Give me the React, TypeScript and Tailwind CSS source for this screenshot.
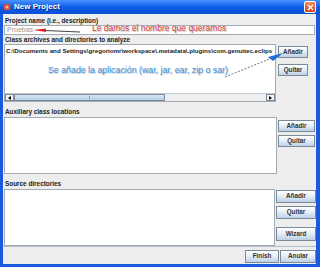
import React from "react";

const btn =
  "flex items-center justify-center border border-[#7a8a99] bg-gradient-to-b from-[#ffffff] via-[#e3ecf6] to-[#bcd0e6] text-[6.3px] font-bold text-[#333] leading-none";

const Label = ({ text, h, pb = 0 }: { text: string; h: string; pb?: number }) => (
  <div className={`${h} flex items-end pl-[2px] text-[6.4px] font-bold text-[#222] leading-[7px]`} style={{ paddingBottom: pb }}>
    {text}
  </div>
);

const App = () => {
  return (
    <div className="relative w-[320px] h-[267px] bg-[#1a5ade] flex flex-col overflow-hidden font-['Liberation_Sans',Arial,sans-serif]">
      {/* title bar */}
      <div className="h-[14px] flex items-center bg-gradient-to-b from-[#4a92ff] via-[#0c5ce8] to-[#0a50d4] pl-[3px] pr-[4px]">
        <svg width="8" height="8" viewBox="0 0 8 8">
          <circle cx="4" cy="4" r="3.5" fill="#e04a3a" />
          <circle cx="4" cy="4" r="1.6" fill="#f5b0a0" />
        </svg>
        <span className="ml-[3px] text-[8px] font-bold text-white [text-shadow:1px_1px_0_#0a2a80]">New Project</span>
        <div className="ml-auto w-[12px] h-[12px] rounded-[2px] border border-white bg-gradient-to-b from-[#f08a5a] to-[#d2401c] flex items-center justify-center">
          <svg width="7" height="7" viewBox="0 0 7 7">
            <path d="M1 1 L6 6 M6 1 L1 6" stroke="#fff" strokeWidth="1.4" />
          </svg>
        </div>
      </div>

      {/* body */}
      <div className="flex-1 ml-[3px] mr-[4px] mb-[3px] bg-[#ededed] flex flex-col pt-[2px]">
        <Label text="Project name (i.e., description)" h="h-[8px]" />
        <div className="mt-[1px] mx-[1px] h-[10px] bg-white border border-[#a3abb5] flex items-center pl-[2px] text-[7px] text-[#999]">
          Pruebas
        </div>
        <Label text="Class archives and directories to analyze" h="h-[9px]" pb={1} />

        {/* row 1 */}
        <div className="h-[59px] flex">
          <div className="ml-[1px] w-[272px] h-[58px] bg-white border border-[#a3abb5] flex flex-col">
            <div className="pt-[3px] pl-[1px] text-[6.2px] font-bold text-[#222] leading-none whitespace-nowrap">
              C:\Documents and Settings\gregoriomr\workspace\.metadata\.plugins\com.genuitec.eclips
            </div>
            <div className="mt-auto h-[8px] flex bg-[#eeeeee] border-t border-[#c4cad2]">
              <div className="w-[9px] border border-[#7a8a99] bg-[#f4f4f4] flex items-center justify-center">
                <div className="w-0 h-0 border-y-[2px] border-y-transparent border-r-[3px] border-r-black" />
              </div>
              <div className="w-[151px] border border-[#7a8a99] bg-gradient-to-b from-[#dbe8f5] to-[#b5cde6] flex items-center justify-center">
                <div className="w-[1px] h-[3px] bg-[#8aa2bc]" />
              </div>
              <div className="flex-1" />
              <div className="w-[9px] border border-[#7a8a99] bg-[#f4f4f4] flex items-center justify-center">
                <div className="w-0 h-0 border-y-[2px] border-y-transparent border-l-[3px] border-l-black" />
              </div>
            </div>
          </div>
          <div className="ml-[2px] w-[30px] flex flex-col pt-[2px] gap-[6px]">
            <div className={`${btn} h-[12px]`}>Añadir</div>
            <div className={`${btn} h-[12px]`}>Quitar</div>
          </div>
        </div>

        <Label text="Auxiliary class locations" h="h-[14px]" pb={2} />

        {/* row 2 */}
        <div className="h-[58px] flex">
          <div className="ml-[1px] w-[273px] h-[57px] bg-white border border-[#a3abb5]" />
          <div className="ml-[1px] w-[37px] flex flex-col pt-[3px] gap-[3px]">
            <div className={`${btn} h-[12px]`}>Añadir</div>
            <div className={`${btn} h-[12px]`}>Quitar</div>
          </div>
        </div>

        <Label text="Source directories" h="h-[14px]" pb={2} />

        {/* row 3 */}
        <div className="h-[57px] flex">
          <div className="ml-[1px] w-[271px] h-[57px] bg-white border border-[#a3abb5]" />
          <div className="ml-[1px] w-[40px] flex flex-col pt-[1px]">
            <div className={`${btn} h-[13px]`}>Añadir</div>
            <div className={`${btn} h-[13px] mt-[3px]`}>Quitar</div>
            <div className={`${btn} h-[14px] mt-[8px]`}>Wizard</div>
          </div>
        </div>

        {/* footer */}
        <div className="flex-1 border-t border-[#b5bcc5] flex items-start justify-end gap-[1px] pt-[3px]">
          <div className={`${btn} w-[34px] h-[13px]`}>Finish</div>
          <div className={`${btn} w-[36px] h-[13px]`}>Anular</div>
        </div>
      </div>

      {/* annotations */}
      <svg className="absolute left-0 top-0 pointer-events-none" width="320" height="267">
        <line x1="45" y1="30.5" x2="80" y2="32" stroke="#444" strokeWidth="1" />
        <path d="M33 30 L46 28.5 L46 32 Z" fill="#e02020" />
        <line x1="225" y1="77" x2="272" y2="58" stroke="#555" strokeWidth="0.8" strokeDasharray="2 1.5" />
        <path d="M268 57 L283 53 L273 61 Z" fill="#1f6fd6" />
      </svg>
      <div className="absolute left-[92px] top-[24px] text-[8.5px] leading-none text-[#d23c3c] [text-shadow:1px_1px_1px_#c8b8b8] whitespace-nowrap">
        Le damos el nombre que queramos
      </div>
      <div className="absolute left-[48px] top-[66px] text-[8.8px] leading-none text-[#3b8ed6] [text-shadow:1px_1px_1px_#b8c4d0] whitespace-nowrap">
        Se añade la aplicación (war, jar, ear, zip o sar)
      </div>
    </div>
  );
};

export default App;
